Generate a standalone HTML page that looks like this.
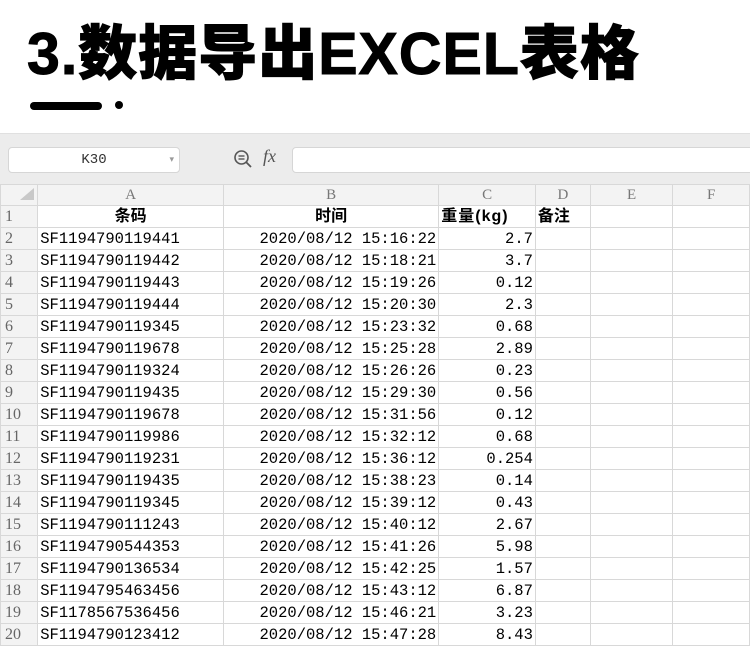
<!DOCTYPE html>
<html><head><meta charset="utf-8"><style>
*{margin:0;padding:0;box-sizing:border-box}
body{width:750px;height:672px;background:#fff;position:relative;overflow:hidden;font-family:"Liberation Mono","Noto Sans CJK SC",monospace}
.title{position:absolute;left:27px;top:14px;font-family:"Liberation Sans","Noto Sans CJK SC",sans-serif;font-weight:900;font-size:59px;line-height:80px;color:#000;white-space:nowrap;letter-spacing:1px;-webkit-text-stroke:1px #000}
.bar{position:absolute;left:30px;top:102px;width:72px;height:8px;border-radius:4px;background:#000}
.dot{position:absolute;left:115px;top:101px;width:8px;height:8px;border-radius:50%;background:#000}
.tb{position:absolute;left:0;top:133px;width:750px;height:51px;background:#ececec;border-top:1px solid #e0e0e0}
.nb{position:absolute;left:8px;top:13px;width:172px;height:26px;background:#fff;border:1px solid #d6d6d6;border-radius:4px;font-size:14px;line-height:24px;text-align:center;color:#333}
.nb span{position:absolute;right:5px;top:0;font-size:9px;color:#999}
.fx{position:absolute;left:234px;top:12px;font-size:18px;color:#555;font-family:"Liberation Serif",serif;font-style:italic}
.fb{position:absolute;left:292px;top:13px;width:470px;height:26px;background:#fff;border:1px solid #d6d6d6;border-radius:4px}
table{position:absolute;left:0;top:184px;border-collapse:collapse;table-layout:fixed}
td{border:1px solid #d8d8d8;height:22px;font-size:15.5px;line-height:20px;padding:0 2px;white-space:nowrap;overflow:hidden;color:#000}
tr.h td{height:20px;background:#f3f3f3;color:#777;text-align:center;font-family:"Liberation Serif",serif;font-size:15px}
td.n{background:#f3f3f3;color:#666;text-align:left;padding-left:4px;font-family:"Liberation Serif",serif;font-size:16px}
td.r{text-align:right}
td.b{font-weight:bold;font-family:"Liberation Sans","Noto Sans CJK SC",sans-serif;font-size:16px}
</style></head><body>
<div class="title">3.数据导出EXCEL表格</div>
<div class="bar"></div><div class="dot"></div>
<div class="tb">
<div class="nb">K30<span>▾</span></div>
<svg style="position:absolute;left:233px;top:15px" width="20" height="20" viewBox="0 0 20 20"><circle cx="8.5" cy="8.5" r="6.5" fill="none" stroke="#555" stroke-width="1.6"/><line x1="13" y1="13" x2="18" y2="18" stroke="#555" stroke-width="1.8"/><line x1="5.5" y1="7" x2="11.5" y2="7" stroke="#555" stroke-width="1.4"/><line x1="5.5" y1="10" x2="11.5" y2="10" stroke="#555" stroke-width="1.4"/></svg>
<div class="fx" style="left:263px">fx</div>
<div class="fb"></div>
</div>
<table>
<colgroup><col style="width:38px"><col style="width:188px"><col style="width:217px"><col style="width:98px"><col style="width:56px"><col style="width:86px"><col style="width:80px"></colgroup>
<tr class="h"><td style="background:#f3f3f3"><svg width="14" height="12" style="position:relative;left:8px;top:1px"><polygon points="14,0 14,12 0,12" fill="#c8c8c8"/></svg></td><td>A</td><td>B</td><td>C</td><td>D</td><td>E</td><td>F</td></tr>
<tr><td class="n">1</td><td class="b" style="text-align:center">条码</td><td class="b" style="text-align:center">时间</td><td class="b" style="letter-spacing:1px">重量(kg)</td><td class="b">备注</td><td></td><td></td></tr>
<tr><td class="n">2</td><td>SF1194790119441</td><td class="r">2020/08/12 15:16:22</td><td class="r">2.7</td><td></td><td></td><td></td></tr>
<tr><td class="n">3</td><td>SF1194790119442</td><td class="r">2020/08/12 15:18:21</td><td class="r">3.7</td><td></td><td></td><td></td></tr>
<tr><td class="n">4</td><td>SF1194790119443</td><td class="r">2020/08/12 15:19:26</td><td class="r">0.12</td><td></td><td></td><td></td></tr>
<tr><td class="n">5</td><td>SF1194790119444</td><td class="r">2020/08/12 15:20:30</td><td class="r">2.3</td><td></td><td></td><td></td></tr>
<tr><td class="n">6</td><td>SF1194790119345</td><td class="r">2020/08/12 15:23:32</td><td class="r">0.68</td><td></td><td></td><td></td></tr>
<tr><td class="n">7</td><td>SF1194790119678</td><td class="r">2020/08/12 15:25:28</td><td class="r">2.89</td><td></td><td></td><td></td></tr>
<tr><td class="n">8</td><td>SF1194790119324</td><td class="r">2020/08/12 15:26:26</td><td class="r">0.23</td><td></td><td></td><td></td></tr>
<tr><td class="n">9</td><td>SF1194790119435</td><td class="r">2020/08/12 15:29:30</td><td class="r">0.56</td><td></td><td></td><td></td></tr>
<tr><td class="n">10</td><td>SF1194790119678</td><td class="r">2020/08/12 15:31:56</td><td class="r">0.12</td><td></td><td></td><td></td></tr>
<tr><td class="n">11</td><td>SF1194790119986</td><td class="r">2020/08/12 15:32:12</td><td class="r">0.68</td><td></td><td></td><td></td></tr>
<tr><td class="n">12</td><td>SF1194790119231</td><td class="r">2020/08/12 15:36:12</td><td class="r">0.254</td><td></td><td></td><td></td></tr>
<tr><td class="n">13</td><td>SF1194790119435</td><td class="r">2020/08/12 15:38:23</td><td class="r">0.14</td><td></td><td></td><td></td></tr>
<tr><td class="n">14</td><td>SF1194790119345</td><td class="r">2020/08/12 15:39:12</td><td class="r">0.43</td><td></td><td></td><td></td></tr>
<tr><td class="n">15</td><td>SF1194790111243</td><td class="r">2020/08/12 15:40:12</td><td class="r">2.67</td><td></td><td></td><td></td></tr>
<tr><td class="n">16</td><td>SF1194790544353</td><td class="r">2020/08/12 15:41:26</td><td class="r">5.98</td><td></td><td></td><td></td></tr>
<tr><td class="n">17</td><td>SF1194790136534</td><td class="r">2020/08/12 15:42:25</td><td class="r">1.57</td><td></td><td></td><td></td></tr>
<tr><td class="n">18</td><td>SF1194795463456</td><td class="r">2020/08/12 15:43:12</td><td class="r">6.87</td><td></td><td></td><td></td></tr>
<tr><td class="n">19</td><td>SF1178567536456</td><td class="r">2020/08/12 15:46:21</td><td class="r">3.23</td><td></td><td></td><td></td></tr>
<tr><td class="n">20</td><td>SF1194790123412</td><td class="r">2020/08/12 15:47:28</td><td class="r">8.43</td><td></td><td></td><td></td></tr>
</table>
</body></html>
